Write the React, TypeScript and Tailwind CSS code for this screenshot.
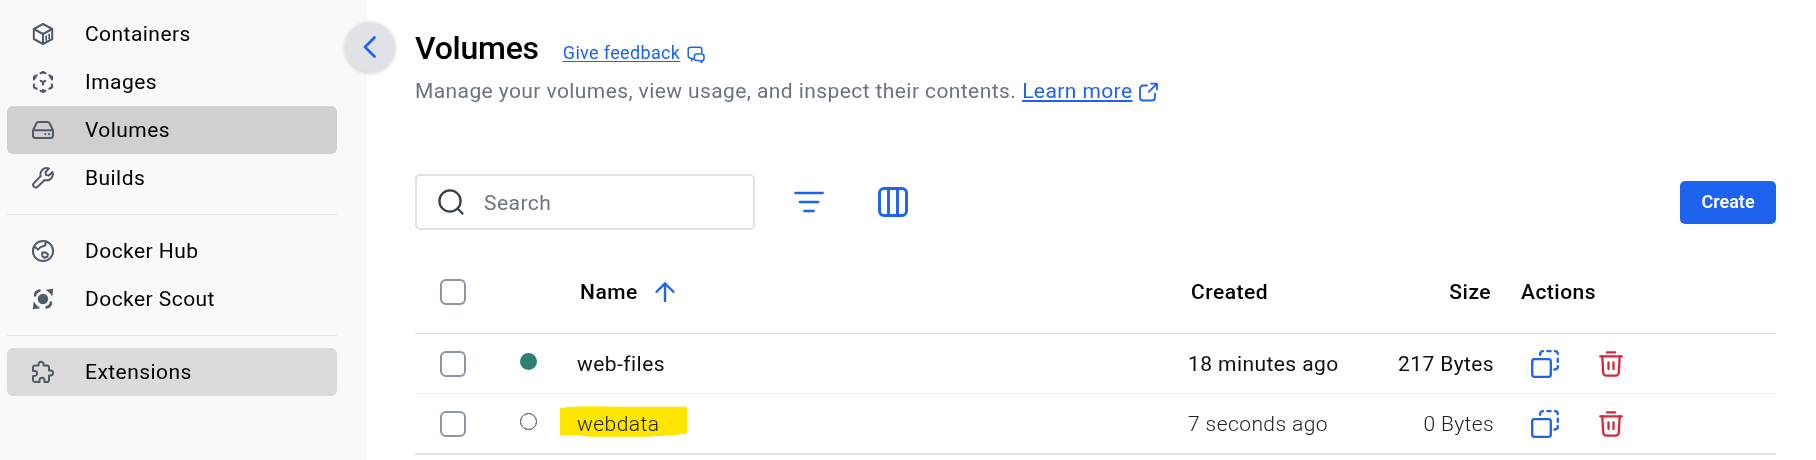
import React from "react";

type IconProps = { className?: string };

function ContainersIcon({ className }: IconProps) {
  return (
    <svg className={className} width="24" height="24" viewBox="0 0 24 24" fill="none" stroke="currentColor" strokeWidth="2" strokeLinejoin="round" strokeLinecap="round">
      <path d="M12 2 21.200 7v10L12 22 2.800 17V7L12 2Z" />
      <path d="M2.800 7 12 12l9.200-5M12 12v10" />
      <path d="M15.200 14v4M18.200 12.400v4" strokeWidth="1.700" />
    </svg>
  );
}

function ImagesIcon({ className }: IconProps) {
  return (
    <svg className={className} width="24" height="24" viewBox="0 0 24 24" fill="none" stroke="currentColor" strokeWidth="2.200" strokeLinejoin="round" strokeLinecap="round">
      <path d="M9.600 3.200 12 2l2.400 1.200M18.400 5.400l2.600 1.500v2.600M21 14.600v2.600l-2.600 1.500M14.400 20.800 12 22l-2.400-1.200M5.600 18.700 3 17.200v-2.600M3 9.500V6.900l2.600-1.500" />
      <path d="m9.800 10.900 2.200 1.200 2.200-1.200M12 12.100v2.400" />
      <path d="M12 20v1.600M4.500 7.500l-1-.5M19.500 7.500l1-.5" />
    </svg>
  );
}

function VolumesIcon({ className }: IconProps) {
  return (
    <svg className={className} width="24" height="24" viewBox="0 0 24 24" fill="none" stroke="currentColor" strokeWidth="2" strokeLinejoin="round" strokeLinecap="round">
      <path d="M2 12.400 5.400 5.200A2.400 2.400 0 0 1 7.500 4h9a2.400 2.400 0 0 1 2.100 1.200L22 12.400V17.600a2.400 2.400 0 0 1-2.400 2.400H4.400A2.400 2.400 0 0 1 2 17.600ZM2.300 12.200h19.400" />
      <path d="M14.300 16.100h.1M18 16.100h.1" strokeWidth="2.100" />
    </svg>
  );
}

function BuildsIcon({ className }: IconProps) {
  return (
    <svg className={className} width="24" height="24" viewBox="0 0 24 24" fill="none" stroke="currentColor" strokeWidth="2" strokeLinejoin="round" strokeLinecap="round">
      <path d="M17.800 2.500A6.200 6.200 0 0 0 9.700 10.100L2.800 17.200a2.400 2.400 0 0 0 0 3.300l.4.400a2.300 2.300 0 0 0 3.300 0l7.200-6.900A6.200 6.200 0 0 0 21.500 6.100l-3.700 3.500-2.700-.7-.7-2.700Z" />
    </svg>
  );
}

function HubIcon({ className }: IconProps) {
  return (
    <svg className={className} width="24" height="24" viewBox="0 0 24 24" fill="none" stroke="currentColor" strokeWidth="2" strokeLinejoin="round" strokeLinecap="round">
      <circle cx="12" cy="12" r="10.100" />
      <path d="m3.600 7.700 3.600 2.900 2.200-2.500 4.900-1.600.5-4" />
      <path d="M11.200 13.400h3.200l2.600 2-.6 2.300-3.200 1-2-1.800Z" />
    </svg>
  );
}

function ScoutIcon({ className }: IconProps) {
  return (
    <svg className={className} width="24" height="24" viewBox="0 0 24 24" fill="none" stroke="currentColor">
      <circle cx="12" cy="12" r="5.200" fill="currentColor" stroke="none" />
      <path d="M22.200 1.800 21.300 9.400Q18.800 5.200 14.600 2.700ZM1.800 22.200 2.700 14.600Q5.200 18.800 9.400 21.300Z" fill="currentColor" stroke="none" />
      <path d="M4 9.500C4 5.600 5.900 3.800 9.500 3.700M20 14.500c0 3.900-1.900 5.700-5.500 5.800" strokeWidth="2.700" />
    </svg>
  );
}

function ExtensionsIcon({ className }: IconProps) {
  return (
    <svg className={className} width="24" height="24" viewBox="0 0 24 24" fill="none" stroke="currentColor" strokeWidth="2" strokeLinejoin="round">
      <path d="M7.600 5.400V4.300a2.500 2.500 0 0 1 5 0v1.100H16a2 2 0 0 1 2 2v3.100h1.600a2.500 2.500 0 0 1 0 5H18V20a2 2 0 0 1-2 2h-2.500v-1.700a2.500 2.500 0 0 0-5 0V22H4.200a2.200 2.200 0 0 1-2.200-2.200v-3.900h1.600a2.500 2.500 0 0 0 0-5H2V7.400a2 2 0 0 1 2-2Z" />
    </svg>
  );
}

function FeedbackIcon() {
  return (
    <svg width="18" height="18" viewBox="0 0 18 18" fill="none" stroke="currentColor" strokeWidth="1.500" strokeLinejoin="round" strokeLinecap="round">
      <path d="M4.700 14.800V12.200H3.600A2.400 2.400 0 0 1 1.200 9.800V3.600A2.400 2.400 0 0 1 3.600 1.200h8.800a2.400 2.400 0 0 1 2.400 2.400v3.200M4.700 14.300l2.300-2" />
      <path d="M9.600 8h5.200A2.200 2.200 0 0 1 17 10.200v2.200a2.200 2.200 0 0 1-2.100 2.200v2l-2.400-2H9.600a2.200 2.200 0 0 1-2.200-2.200v-2.200A2.200 2.200 0 0 1 9.600 8Z" />
    </svg>
  );
}

function ExternalIcon() {
  return (
    <svg width="19" height="20" viewBox="0.500 0 19 20" fill="none" stroke="currentColor" strokeWidth="1.800" strokeLinejoin="round" strokeLinecap="round">
      <path d="M8.500 3.500H4.500A3 3 0 0 0 1.500 6.500v9a3 3 0 0 0 3 3h9a3 3 0 0 0 3-3V11.300" />
      <path d="M12.600 1.700h5.900v5.900M18.300 1.900l-8 8" />
    </svg>
  );
}

function CopyIcon() {
  return (
    <svg width="28" height="28" viewBox="0 0 28 28" fill="none" stroke="currentColor" strokeWidth="2.300" strokeLinecap="round">
      <rect x="1.200" y="9.200" width="18.600" height="17.600" rx="2.200" />
      <path d="M9.100 4.900V4.100A2.900 2.900 0 0 1 12 1.200M16.400 1.200h3.200M24 1.200A2.900 2.900 0 0 1 26.800 4.100M26.800 8.600v3.300M26.800 16v.700A2.900 2.900 0 0 1 24 19.500h-.600" />
    </svg>
  );
}

function TrashIcon() {
  return (
    <svg width="24" height="26" viewBox="0 0 24 26" fill="none" stroke="currentColor" strokeWidth="2.300" strokeLinecap="round" strokeLinejoin="round">
      <path d="M8 1.400h8M1.200 5.300h21.600" />
      <path d="m3.300 5.500.9 16A3.200 3.200 0 0 0 7.400 24.700h9.200a3.200 3.200 0 0 0 3.200-3.200l.9-16" />
      <path d="M9.500 11.500v6.500M14.500 11.500v6.500" />
    </svg>
  );
}

type NavItemProps = { icon: React.ReactNode; label: string; bg?: string };

function NavItem({ icon, label, bg = "" }: NavItemProps) {
  return (
    <a className={`flex h-12 items-center rounded-[6px] pl-6 text-[#505a6b] ${bg}`}>
      {icon}
      <span className="ml-[30px] text-[21px] leading-6 tracking-[0.45px] text-black">{label}</span>
    </a>
  );
}

function Checkbox() {
  return <span className="ml-[25px] block size-[26px] rounded-[6px] border-[2.500px] border-[#8b94a8] bg-white" />;
}

const columns = "grid grid-cols-[162px_610px_173px_133px_283px] items-center";

type RowProps = {
  name: string;
  created: string;
  size: string;
  inUse?: boolean;
  border: string;
};

function Row({ name, created, size, inUse = false, border }: RowProps) {
  const text = inUse ? "font-normal text-[#111]" : "font-light text-[#222]";
  return (
    <div className={`${columns} ${border} text-[21px] ${text}`}>
      <div className="flex items-center">
        <Checkbox />
        <span className={`mb-[4px] ml-[53.500px] size-[17px] rounded-full ${inUse ? "bg-[#2e7f74]" : "border-[1.500px] border-[#677285] outline-[0.500px] -outline-offset-[1.500px] outline-[#677285]"}`} />
      </div>
      <div className="pt-[2px]">
        <span className="relative inline-block tracking-[0.45px]">
          {name}
          {!inUse && (
            <svg className="absolute top-[-3px] left-[-17px] mix-blend-multiply" width="127" height="31" viewBox="0 0 127 31">
              <path d="M0 2H5V1L30 .3 62 .8H127V27.500L110 29.500 85 30.800H30L18 29.300H0Z" fill="#ffe600" />
            </svg>
          )}
        </span>
      </div>
      <div className="pt-[2px] pl-px tracking-[0.420px]">{created}</div>
      <div className="-mr-px pt-[2px] text-right tracking-[0.380px]">{size}</div>
      <div className="flex items-center gap-10 pl-[38px]">
        <span className="text-[#1d63ed]"><CopyIcon /></span>
        <span className="text-[#d72638]"><TrashIcon /></span>
      </div>
    </div>
  );
}

export default function App() {
  return (
    <div className="flex h-[460px] w-[1816px] overflow-hidden bg-white font-[Roboto,sans-serif] text-black">
      <aside className="relative w-[367px] shrink-0 bg-[#f9f9f9] pt-[10px] pr-[30px] pl-[7px]">
        <nav>
          <NavItem icon={<ContainersIcon />} label="Containers" />
          <NavItem icon={<ImagesIcon />} label="Images" />
          <NavItem icon={<VolumesIcon />} label="Volumes" bg="bg-[#d0d0d0]" />
          <NavItem icon={<BuildsIcon />} label="Builds" />
          <hr className="mt-3 mb-3 border-[#e3e3e3]" />
          <NavItem icon={<HubIcon />} label="Docker Hub" />
          <NavItem icon={<ScoutIcon />} label="Docker Scout" />
          <hr className="mt-3 mb-3 border-[#e3e3e3]" />
          <NavItem icon={<ExtensionsIcon />} label="Extensions" bg="bg-[#dbdbdb]" />
        </nav>
        <button className="absolute top-[22px] left-[345px] z-10 flex size-[50px] items-center justify-center rounded-full bg-[#e1e2e6] text-[#1d63ed] shadow-[0_1px_4px_rgba(0,0,0,0.2)]">
          <svg width="14" height="22" viewBox="0 0 14 22" fill="none" stroke="currentColor" strokeWidth="2.700" strokeLinecap="round" strokeLinejoin="round">
            <path d="M11.500 1.500 2 11l9.500 9.500" />
          </svg>
        </button>
      </aside>

      <main className="flex w-[1409px] flex-col pl-12">
        <header>
          <div className="flex h-[74px] items-end pb-[7px]">
            <h1 className="text-[32px] leading-[38px] font-medium tracking-[-0.250px]">Volumes</h1>
            <a className="ml-[24px] flex items-center gap-[7px] pb-[1px] text-[18px] leading-[26px] tracking-[0.350px] text-[#1d63ed]">
              <span className="underline decoration-1 underline-offset-[2px]">Give feedback</span>
              <span className="mt-1"><FeedbackIcon /></span>
            </a>
          </div>
          <p className="flex h-[34px] items-center pt-[2px] text-[21px] tracking-[0.410px] text-[#6b7380]">
            Manage your volumes, view usage, and inspect their contents.
            <a className="ml-[6px] flex items-center gap-[7px] text-[#1d63ed]">
              <span className="underline decoration-2 underline-offset-[2px]">Learn more</span>
              <ExternalIcon />
            </a>
          </p>
        </header>

        <div className="mt-[66px] flex h-14 items-center">
          <label className="flex h-14 w-[340px] items-center rounded-[5px] border-2 border-[#e1e2e6] pl-[21px]">
            <svg width="26" height="26" viewBox="0 0 26 26" fill="none" stroke="#393f49" strokeWidth="2.300" strokeLinecap="round">
              <circle cx="12" cy="12" r="10.600" />
              <path d="m19.500 19.500 5 5" />
            </svg>
            <span className="mt-[3px] ml-5 text-[21px] tracking-[0.450px] text-[#6b7380]">Search</span>
          </label>
          <svg className="ml-[39px] text-[#1d63ed]" width="30" height="22" viewBox="0 0 30 22" fill="none" stroke="currentColor" strokeWidth="2.700" strokeLinecap="round">
            <path d="M1.500 2h27M6 11h18M10.500 20h9" />
          </svg>
          <svg className="ml-[54px] text-[#1d63ed]" width="30" height="30" viewBox="0 0 30 30" fill="none" stroke="currentColor" strokeWidth="2.900">
            <rect x="1.500" y="1.500" width="27" height="27" rx="4.500" />
            <path d="M10.500 1.500v27M19.500 1.500v27" />
          </svg>
          <button className="ml-auto h-[43px] w-24 rounded-[5px] bg-[#1d63ed] pb-[2px] text-[18px] font-semibold text-white">Create</button>
        </div>

        <section className="mt-[21px] w-[1361px]">
          <div className={`${columns} h-[83px] border-b border-[#dedede] text-[21px] font-medium tracking-[0.480px]`}>
            <div><Checkbox /></div>
            <div className="flex items-center gap-[17px] pl-[3px]">
              <span className="pt-[2px]">Name</span>
              <svg className="text-[#1d63ed]" width="20" height="20" viewBox="0 0 20 20" fill="none" stroke="currentColor" strokeWidth="2.400">
                <path d="M10 20V1.500M.900 10.500 10 1.500l9.100 9" />
              </svg>
            </div>
            <div className="pt-[2px] pl-1">Created</div>
            <div className="pt-[2px] pr-[2px] text-right">Size</div>
            <div className="pt-[2px] pl-7">Actions</div>
          </div>
          <Row name="web-files" created="18 minutes ago" size="217 Bytes" inUse border="h-[60px] border-b border-[#efefef]" />
          <Row name="webdata" created="7 seconds ago" size="0 Bytes" border="h-[61px] border-b-2 border-[#e0e0e0]" />
        </section>
      </main>
    </div>
  );
}
